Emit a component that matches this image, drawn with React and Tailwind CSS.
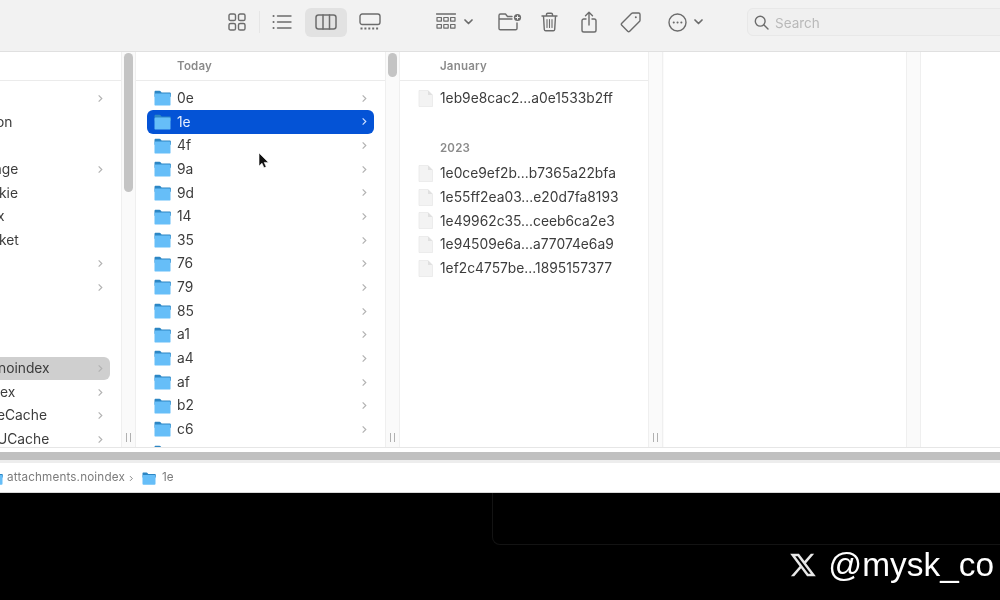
import { RiTwitterXLine } from "react-icons/ri";

const folders = ["0e", "1e", "4f", "9a", "9d", "14", "35", "76", "79", "85", "a1", "a4", "af", "b2", "c6", "d1"];
const recentFiles = ["1eb9e8cac2...a0e1533b2ff"];
const olderFiles = [
  "1e0ce9ef2b...b7365a22bfa",
  "1e55ff2ea03...e20d7fa8193",
  "1e49962c35...ceeb6ca2e3",
  "1e94509e6a...a77074e6a9",
  "1ef2c4757be...1895157377",
];

const Chevron = ({ className = "text-[#b2b2b2]" }) => (
  <svg width="6" height="9" viewBox="0 0 6 10" fill="none" stroke="currentColor" strokeWidth="1.3" className={className}>
    <path d="M1.5 1.5l3.5 3.5-3.5 3.5" />
  </svg>
);

const Folder = ({ className = "w-[17px] h-[16px]" }) => (
  <svg viewBox="0 0 17 16" className={`shrink-0 ${className}`}>
    <path d="M0.5 2c0-.8.5-1.3 1.3-1.3h3.6c.7 0 1 .3 1.4.8l.8 1h8c.7 0 1.3.5 1.3 1.3v3H.5z" fill="#2c86c4" />
    <rect x="0.5" y="3.6" width="16" height="12" rx="1.2" fill="#66bef8" />
  </svg>
);

const FileIcon = () => (
  <svg viewBox="0 0 15 17" className="w-[15px] h-[17px] shrink-0">
    <path d="M1 .5h9l4.5 4.5v11.5H1z" fill="#f3f3f3" stroke="#e8e8e8" strokeWidth="0.8" />
    <path d="M10 .5v4.5h4.5z" fill="#e0e0e0" />
  </svg>
);

const Gutter = ({ thumb, grip }) => (
  <div className="w-[15px] shrink-0 bg-[#fafafa] border-x border-[#efefef] flex flex-col items-center justify-between pt-[1px] pb-[5px]">
    {thumb ? <div className={`w-[9px] rounded-full bg-[#c4c4c4] ${thumb}`} /> : <div />}
    {grip ? (
      <div className="flex gap-[3px]">
        <div className="w-[1px] h-[9px] bg-[#b0b0b0]" />
        <div className="w-[1px] h-[9px] bg-[#b0b0b0]" />
      </div>
    ) : (
      <div />
    )}
  </div>
);

const ColumnHeader = ({ children, className = "" }) => (
  <div className={`h-[28.5px] shrink-0 pt-[1px] border-b border-[#ebebeb] flex items-center text-[11.5px] font-semibold text-[#8a8a8a] tracking-[0.2px] ${className}`}>
    {children}
  </div>
);

const ClippedRow = ({ label, indent, chevron, selected }) => (
  <div className={`h-[23.65px] shrink-0 flex items-center justify-between pr-[7px] mr-[11px] rounded-r-[6px] ${selected ? "bg-[#cfcfcf]" : ""}`}>
    <span className={`text-[13.8px] text-[#3c3c3c] -translate-y-[0.5px] whitespace-nowrap ${indent}`}>{label}</span>
    {chevron && <Chevron />}
  </div>
);

const ToolIcon = ({ children, className = "w-[20px] h-[20px]", viewBox = "0 0 20 20" }) => (
  <svg viewBox={viewBox} fill="none" stroke="#6c6c6c" strokeWidth="1.4" strokeLinecap="round" strokeLinejoin="round" className={`shrink-0 ${className}`}>
    {children}
  </svg>
);

const Toolbar = () => (
  <div className="h-[52px] shrink-0 bg-[#f2f2f2] border-b border-[#e0e0e0] flex items-center pl-[228px] pb-[7px]">
    <ToolIcon className="w-[18px] h-[18px]" viewBox="0 0 18 18">
      <rect x="1" y="1" width="6.5" height="6.5" rx="1.6" />
      <rect x="10.5" y="1" width="6.5" height="6.5" rx="1.6" />
      <rect x="1" y="10.5" width="6.5" height="6.5" rx="1.6" />
      <rect x="10.5" y="10.5" width="6.5" height="6.5" rx="1.6" />
    </ToolIcon>
    <div className="w-[1px] h-[22px] bg-[#e6e6e6] ml-[13px] mr-[12px]" />
    <ToolIcon className="w-[20px] h-[16px]" viewBox="0 0 20 16">
      <path d="M5.5 2h13.5M5.5 8h13.5M5.5 14h13.5" />
      <path d="M1.5 2h.1M1.5 8h.1M1.5 14h.1" strokeWidth="2" />
    </ToolIcon>
    <div className="ml-[13px] w-[42px] h-[29px] rounded-[6px] bg-[#e2e2e2] flex items-center justify-center">
      <ToolIcon className="w-[22px] h-[16px]" viewBox="0 0 22 16">
        <rect x="1" y="1" width="20" height="14" rx="2.5" strokeWidth="1.5" />
        <path d="M8 1v14M14.5 1v14" strokeWidth="1.5" />
      </ToolIcon>
    </div>
    <ToolIcon className="w-[22px] h-[18px] ml-[12px]" viewBox="0 0 22 18">
      <rect x="1" y="1" width="20" height="10.5" rx="2.2" />
      <path d="M1.5 15.5h19" strokeDasharray="2 1.9" strokeLinecap="butt" strokeWidth="2" />
    </ToolIcon>
    <ToolIcon className="w-[20px] h-[18px] ml-[55px]" viewBox="0 0 20 18">
      <path d="M.5 1h19" />
      <path d="M1 4.5h4.4v3.6H1zM7.8 4.5h4.4v3.6H7.8zM14.6 4.5H19v3.6h-4.4zM1 11.5h4.4v3.6H1zM7.8 11.5h4.4v3.6H7.8zM14.6 11.5H19v3.6h-4.4z" strokeWidth="1.2" />
    </ToolIcon>
    <ToolIcon className="w-[9px] h-[6px] ml-[8px]" viewBox="0 0 9 6">
      <path d="M1 1l3.5 3.5L8 1" strokeWidth="1.7" />
    </ToolIcon>
    <ToolIcon className="w-[24px] h-[20px] ml-[25px]" viewBox="0 0 24 20">
      <path d="M1 5V3.5C1 2.5 1.7 2 2.5 2h5l2 2.5H14M1 7h13M1 5v11.5c0 .8.6 1.3 1.4 1.3h15.2c.8 0 1.4-.5 1.4-1.3V11" />
      <circle cx="19.5" cy="5.5" r="3.6" fill="#6c6c6c" stroke="none" />
      <path d="M19.5 3.8v3.4M17.8 5.5h3.4" stroke="#f2f2f2" strokeWidth="1" />
    </ToolIcon>
    <ToolIcon className="w-[17px] h-[20px] ml-[19px]" viewBox="0 0 17 20">
      <path d="M1 4h15M5.5 4V2.5c0-.8.5-1.3 1.3-1.3h3.4c.8 0 1.3.5 1.3 1.3V4M2.5 4l.8 13.5c.1.8.6 1.3 1.4 1.3h7.6c.8 0 1.3-.5 1.4-1.3L14.5 4" />
      <path d="M6 7.5v8M8.5 7.5v8M11 7.5v8" strokeWidth="1.1" />
    </ToolIcon>
    <ToolIcon className="w-[16px] h-[22px] ml-[23px]" viewBox="0 0 16 22">
      <path d="M8 14V1.5M4.5 4.8L8 1.3l3.5 3.5M5 8H2.8C1.8 8 1 8.7 1 9.8v9.4c0 1 .8 1.8 1.8 1.8h10.4c1 0 1.8-.8 1.8-1.8V9.8C15 8.7 14.2 8 13.2 8H11" />
    </ToolIcon>
    <ToolIcon className="w-[22px] h-[22px] ml-[23px]" viewBox="0 0 22 22">
      <path d="M1.8 12.3L11.5 2.6c.4-.4.8-.6 1.3-.6h5.8c.8 0 1.4.6 1.4 1.4v5.8c0 .5-.2 .9-.6 1.3l-9.7 9.7c-.6.6-1.4.6-2 0l-5.9-5.9c-.6-.6-.6-1.4 0-2z" />
      <circle cx="15.8" cy="6.2" r="1" fill="#6c6c6c" stroke="none" />
    </ToolIcon>
    <ToolIcon className="w-[19px] h-[19px] ml-[26px]" viewBox="0 0 19 19">
      <circle cx="9.5" cy="9.5" r="8.5" />
      <path d="M5.7 9.5h.1M9.5 9.5h.1M13.3 9.5h.1" strokeWidth="2" />
    </ToolIcon>
    <ToolIcon className="w-[9px] h-[6px] ml-[7px]" viewBox="0 0 9 6">
      <path d="M1 1l3.5 3.5L8 1" strokeWidth="1.7" />
    </ToolIcon>
    <div className="ml-[44px] flex-1 h-[28px] -mr-[10px] rounded-[6px] bg-[#f0f0f0] border border-[#e8e8e8] flex items-center pl-[6px] gap-[6px]">
      <ToolIcon className="w-[15px] h-[15px]" viewBox="0 0 15 15">
        <circle cx="6.2" cy="6.2" r="4.9" />
        <path d="M10 10l4 4" />
      </ToolIcon>
      <span className="text-[13.5px] text-[#b9b9b9] translate-y-[1px]">Search</span>
    </div>
  </div>
);

const SidebarColumn = () => (
  <div className="w-[121px] shrink-0 flex flex-col overflow-hidden">
    <ColumnHeader />
    <div className="pt-[6px] flex flex-col">
      <ClippedRow chevron />
      <ClippedRow label="on" indent="-ml-[4px]" />
      <ClippedRow />
      <ClippedRow label="age" indent="-ml-[6px]" chevron />
      <ClippedRow label="kie" indent="-ml-[1px]" />
      <ClippedRow label="x" indent="-ml-[3px]" />
      <ClippedRow label="ket" indent="-ml-[1px]" />
      <ClippedRow chevron />
      <ClippedRow chevron />
      <div className="h-[57.3px] shrink-0" />
      <ClippedRow label="noindex" indent="-ml-[2px]" chevron selected />
      <ClippedRow label="ex" chevron />
      <ClippedRow label="eCache" indent="-ml-[3px]" chevron />
      <ClippedRow label="UCache" indent="-ml-[3px]" chevron />
    </div>
  </div>
);

const FolderColumn = () => (
  <div className="relative w-[249px] shrink-0 flex flex-col overflow-hidden">
    <ColumnHeader className="pl-[41px]">Today</ColumnHeader>
    <div className="pt-[6px] flex flex-col">
      {folders.map((name) => {
        const selected = name === "1e";
        return (
          <div key={name} className={`h-[23.65px] shrink-0 mx-[11px] pl-[7px] pr-[7px] flex items-center rounded-[6px] ${selected ? "bg-[#0453d6]" : ""}`}>
            <Folder />
            <span className={`ml-[6px] flex-1 text-[13.8px] -translate-y-[0.5px] ${selected ? "text-[#e8f0ff]" : "text-[#3c3c3c]"}`}>{name}</span>
            <Chevron className={selected ? "text-[#cfe0ff]" : "text-[#b2b2b2]"} />
          </div>
        );
      })}
    </div>
    <svg viewBox="0 0 12 18" className="absolute left-[122px] top-[100px] w-[12px] h-[18px]">
      <path d="M1 1v13l3-2.8 2 4.6 2.2-1-2-4.4h4.3z" fill="#111" stroke="#fff" strokeWidth="0.6" />
    </svg>
  </div>
);

const FileRow = ({ name }) => (
  <div className="h-[23.65px] shrink-0 pl-[18px] flex items-center">
    <FileIcon />
    <span className="ml-[7px] text-[13.8px] text-[#3c3c3c] whitespace-nowrap -translate-y-[0.5px]">{name}</span>
  </div>
);

const FileColumn = () => (
  <div className="w-[248px] shrink-0 flex flex-col overflow-hidden">
    <ColumnHeader className="pl-[40px]">January</ColumnHeader>
    <div className="pt-[6px] flex flex-col">
      {recentFiles.map((name) => (
        <FileRow key={name} name={name} />
      ))}
      <div className="h-[51.75px] shrink-0 flex items-end pb-[7px] pl-[40px] text-[11.5px] leading-[14px] font-semibold text-[#8a8a8a] tracking-[0.2px]">2023</div>
      {olderFiles.map((name) => (
        <FileRow key={name} name={name} />
      ))}
    </div>
  </div>
);

const PathBar = () => (
  <div className="h-[30px] shrink-0 pt-[1px] bg-white border-b border-[#d8d8d8] flex items-center text-[11.7px] text-[#7c7c7c] overflow-hidden">
    <Folder className="w-[14px] h-[13px] -ml-[11px]" />
    <span className="ml-[4px] tracking-[0.15px]">attachments.noindex</span>
    <Chevron className="ml-[3px] text-[#777777] scale-75" />
    <Folder className="w-[14px] h-[13px] ml-[8px]" />
    <span className="ml-[6px]">1e</span>
  </div>
);

export default function App() {
  return (
    <div className="w-[1000px] h-[600px] overflow-hidden bg-black flex flex-col font-['Inter',sans-serif] blur-[0.4px]">
      <Toolbar />
      <div className="h-[395px] shrink-0 bg-white flex">
        <SidebarColumn />
        <Gutter thumb="h-[139px]" grip />
        <FolderColumn />
        <Gutter thumb="h-[24px]" grip />
        <FileColumn />
        <div className="shrink-0 flex"><Gutter grip /><div className="w-[1px] bg-[#fafafa]" /></div>
        <div className="w-[242px] shrink-0" />
        <Gutter />
        <div className="flex-1" />
      </div>
      <div className="h-[16px] shrink-0 bg-white border-t border-[#e6e6e6]">
        <div className="h-[8px] mt-[4px] bg-[#c0c0c0]" />
        <div className="h-[3px] bg-[#ededed]" />
      </div>
      <PathBar />
      <div className="flex-1 relative">
        <div className="absolute left-[492px] top-0 right-0 h-[52px] border-l border-b border-[#131313] rounded-bl-[8px]" />
        <div className="absolute right-[6px] top-[55px] flex items-center gap-[10px] text-white font-['Liberation_Sans',sans-serif] text-[33.4px] leading-none">
          <RiTwitterXLine className="w-[30px] h-[30px] text-[#e8e8e8]" />
          <span>@mysk_co</span>
        </div>
      </div>
    </div>
  );
}
